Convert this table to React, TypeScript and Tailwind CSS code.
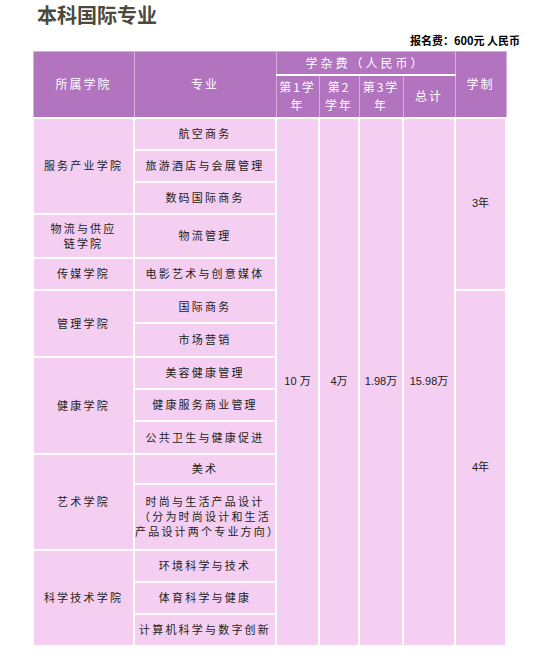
import React from "react";

const cjk = "font-['Noto_Sans_CJK_SC',sans-serif]";

type Row = { major: React.ReactNode; h: number };
type Group = { school: React.ReactNode; rows: Row[] };

const groups: Group[] = [
  {
    school: "服务产业学院",
    rows: [
      { major: "航空商务", h: 32 },
      { major: "旅游酒店与会展管理", h: 32 },
      { major: "数码国际商务", h: 32 },
    ],
  },
  {
    school: (
      <>
        物流与供应
        <br />
        链学院
      </>
    ),
    rows: [{ major: "物流管理", h: 44 }],
  },
  { school: "传媒学院", rows: [{ major: "电影艺术与创意媒体", h: 32 }] },
  {
    school: "管理学院",
    rows: [
      { major: "国际商务", h: 33 },
      { major: "市场营销", h: 34 },
    ],
  },
  {
    school: "健康学院",
    rows: [
      { major: "美容健康管理", h: 32 },
      { major: "健康服务商业管理", h: 32 },
      { major: "公共卫生与健康促进", h: 33 },
    ],
  },
  {
    school: "艺术学院",
    rows: [
      { major: "美术", h: 30 },
      {
        major: (
          <>
            时尚与生活产品设计
            <br />
            （分为时尚设计和生活
            <br />
            产品设计两个专业方向）
          </>
        ),
        h: 66,
      },
    ],
  },
  {
    school: "科学技术学院",
    rows: [
      { major: "环境科学与技术", h: 32 },
      { major: "体育科学与健康", h: 32 },
      { major: "计算机科学与数字创新", h: 32 },
    ],
  },
];

const totalRows = groups.reduce((n, g) => n + g.rows.length, 0);

export default function App() {
  const th =
    "bg-[#b273bf] text-white font-normal text-[12px] tracking-[2px] leading-[18px] border border-[#d6b0db] text-center align-middle";
  const td =
    "bg-[#f4cff1] text-[#222] text-[11px] tracking-[2.2px] leading-[15px] border-2 border-white text-center align-middle";
  const fee = `${td} font-['Liberation_Sans','Noto_Sans_CJK_SC',sans-serif] tracking-normal`;

  let idx = 0;
  const bodyRows: React.ReactNode[] = [];
  groups.forEach((g, gi) => {
    g.rows.forEach((r, ri) => {
      const i = idx++;
      bodyRows.push(
        <tr key={`${gi}-${ri}`} style={{ height: r.h }}>
          {ri === 0 && (
            <td rowSpan={g.rows.length} className={td}>
              {g.school}
            </td>
          )}
          <td className={td}>{r.major}</td>
          {i === 0 && (
            <>
              <td rowSpan={totalRows} className={fee}>
                10 万
              </td>
              <td rowSpan={totalRows} className={fee}>
                4万
              </td>
              <td rowSpan={totalRows} className={fee}>
                1.98万
              </td>
              <td rowSpan={totalRows} className={fee}>
                15.98万
              </td>
              <td rowSpan={5} className={fee}>
                3年
              </td>
            </>
          )}
          {i === 5 && (
            <td rowSpan={totalRows - 5} className={fee}>
              4年
            </td>
          )}
        </tr>
      );
    });
  });

  return (
    <div className={`w-[539px] h-[658px] bg-white ${cjk}`}>
      <div className="pl-[37px] pt-[3px] text-[20px] leading-[24px] font-bold text-[#4b4a3c]">
        本科国际专业
      </div>
      <div className="flex justify-end pr-[19px] pt-[6px] text-[11px] leading-[14px] font-bold text-black">
        报名费：600元 人民币
      </div>
      <table className="ml-[32px] mt-[4px] w-[473px] table-fixed border-collapse">
        <colgroup>
          <col className="w-[101px]" />
          <col className="w-[142px]" />
          <col className="w-[43px]" />
          <col className="w-[40px]" />
          <col className="w-[44px]" />
          <col className="w-[52px]" />
          <col className="w-[51px]" />
        </colgroup>
        <thead>
          <tr className="h-[23px]">
            <th rowSpan={2} className={th}>
              所属学院
            </th>
            <th rowSpan={2} className={th}>
              专业
            </th>
            <th colSpan={4} className={`${th} border-b-2 border-b-white tracking-[3px]`}>
              学杂费（人民币）
            </th>
            <th rowSpan={2} className={th}>
              学制
            </th>
          </tr>
          <tr className="h-[43px]">
            <th className={`${th} tracking-[1px]`}>
              第1学
              <br />年
            </th>
            <th className={`${th} tracking-[1px]`}>
              第2
              <br />
              学年
            </th>
            <th className={`${th} tracking-[1px]`}>
              第3学
              <br />年
            </th>
            <th className={th}>总计</th>
          </tr>
        </thead>
        <tbody className="border-t-2 border-white">{bodyRows}</tbody>
      </table>
    </div>
  );
}
